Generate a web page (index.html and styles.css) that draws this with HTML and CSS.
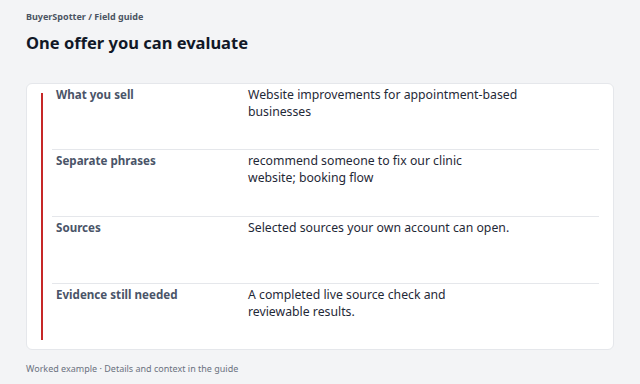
FILE: index.html
```html
<!DOCTYPE html>
<html lang="en">
<head>
<meta charset="utf-8">
<title>One offer you can evaluate</title>
<link rel="stylesheet" href="styles.css">
</head>
<body>
<main class="page">
  <p class="crumb">BuyerSpotter / Field guide</p>
  <h1 class="title">One offer you can evaluate</h1>
  <section class="card">
    <span class="accent" aria-hidden="true"></span>
    <dl class="rows">
      <div class="row">
        <dt class="label">What you sell</dt>
        <dd class="value">Website improvements for appointment-based businesses</dd>
      </div>
      <div class="row">
        <dt class="label">Separate phrases</dt>
        <dd class="value">recommend someone to fix our clinic<br>website; booking flow</dd>
      </div>
      <div class="row">
        <dt class="label">Sources</dt>
        <dd class="value">Selected sources your own account can open.</dd>
      </div>
      <div class="row">
        <dt class="label">Evidence still needed</dt>
        <dd class="value">A completed live source check and<br>reviewable results.</dd>
      </div>
    </dl>
  </section>
  <p class="foot">Worked example · Details and context in the guide</p>
</main>
</body>
</html>
```

FILE: styles.css
```css
* { box-sizing: border-box; }
html, body { margin: 0; padding: 0; }
body {
  background: #f3f4f6;
  font-family: "Noto Sans", "Open Sans", sans-serif;
  color: #1f2937;
}
.page {
  padding: 10px 26px 0 26px;
}
.crumb {
  margin: 0;
  font-size: 9px;
  line-height: 14px;
  font-weight: 700;
  color: #4b5563;
}
.title {
  margin: 7px 0 0 0;
  font-size: 16.5px;
  line-height: 24px;
  font-weight: 700;
  color: #111827;
}
.card {
  position: relative;
  margin-top: 28px;
  width: 588px;
  background: #ffffff;
  border: 1px solid #e5e7eb;
  border-radius: 6px;
  padding: 0 14px 0 25px;
}
.accent {
  position: absolute;
  left: 14px;
  top: 9px;
  bottom: 9px;
  width: 2px;
  background: #c62828;
}
.rows {
  margin: 0;
}
.row {
  display: grid;
  grid-template-columns: 192px 1fr;
  height: 67px;
  padding: 2px 4px 0 4px;
  border-bottom: 1px solid #e5e7eb;
}
.row:first-child {
  height: 66px;
}
.row:last-child {
  border-bottom: none;
  height: 65px;
}
.label {
  margin: 0;
  font-size: 11.6px;
  line-height: 17px;
  font-weight: 700;
  color: #4a5468;
}
.value {
  margin: 0;
  max-width: 274px;
  font-size: 12.25px;
  line-height: 17.4px;
  color: #1f2937;
}
.foot {
  margin: 12px 0 0 0;
  font-size: 9px;
  line-height: 14px;
  color: #6b7280;
}
```
